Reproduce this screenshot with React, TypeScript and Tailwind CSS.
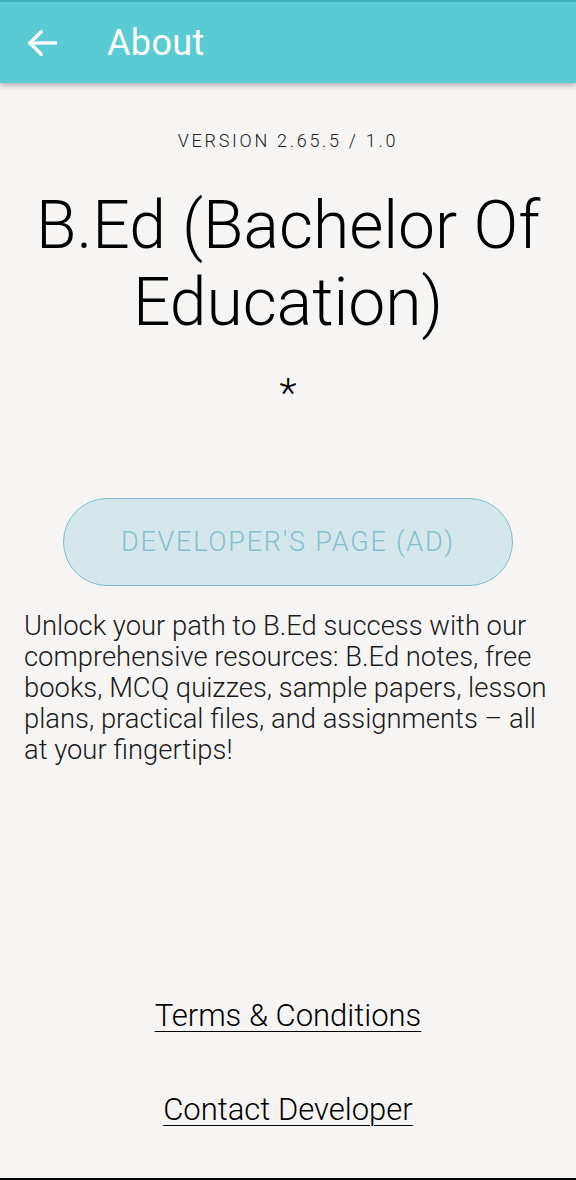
import React from "react";

export default function App() {
  return (
    <div
      className="w-[576px] h-[1180px] bg-[#f6f5f4] flex flex-col overflow-hidden relative"
      style={{ fontFamily: "Roboto, 'Noto Sans', sans-serif" }}
    >
      <header className="h-[83px] bg-[#5acbd3] border-t-2 border-[#3fb3bd] flex items-center shadow-[0_3px_5px_rgba(0,0,0,0.25)] z-10 shrink-0">
        <div className="w-[107px] flex items-center pl-[24px]">
          <svg width="36" height="36" viewBox="0 0 24 24" fill="none" stroke="white" strokeWidth="2.2" strokeLinecap="square">
            <path d="M21 12H4" />
            <path d="M11.5 4.5L4 12l7.5 7.5" strokeLinecap="round" strokeLinejoin="miter" />
          </svg>
        </div>
        <span className="text-white text-[36px] font-normal leading-none tracking-[0.01em]">About</span>
      </header>

      <div className="flex flex-col items-center">
        <p className="mt-[47px] text-[18px] font-light tracking-[0.15em] text-[#222] leading-[22px]">
          VERSION 2.65.5 / 1.0
        </p>
        <h1 className="mt-[35px] text-[66px] font-light leading-[77px] text-black text-center px-[16px]">
          B.Ed (Bachelor Of Education)
        </h1>
        <p className="mt-[33px] text-[40px] font-light leading-[40px] text-black">*</p>
        <button className="mt-[84px] w-[450px] h-[88px] rounded-full bg-[#d4e8eb] border border-[#7cbccb] text-[#82bfcc] text-[27px] font-light tracking-[0.065em]">
          DEVELOPER'S PAGE (AD)
        </button>
        <p className="mt-[25px] pl-[24px] pr-[20px] self-stretch text-[27.4px] font-light leading-[31px] text-[#1a1a1a]">
          Unlock your path to B.Ed success with our comprehensive resources: B.Ed notes, free books, MCQ quizzes, sample papers, lesson plans, practical files, and assignments – all at your fingertips!
        </p>
      </div>

      <div className="flex-1" />
      <div className="flex flex-col items-center gap-[56px] pb-[49px]">
        <a className="text-[31px] font-light underline underline-offset-[5px] decoration-1 text-black leading-[38px]">
          Terms &amp; Conditions
        </a>
        <a className="text-[31px] font-light underline underline-offset-[5px] decoration-1 text-black leading-[38px]">
          Contact Developer
        </a>
      </div>
      <div className="h-[2px] bg-black shrink-0" />
    </div>
  );
}
